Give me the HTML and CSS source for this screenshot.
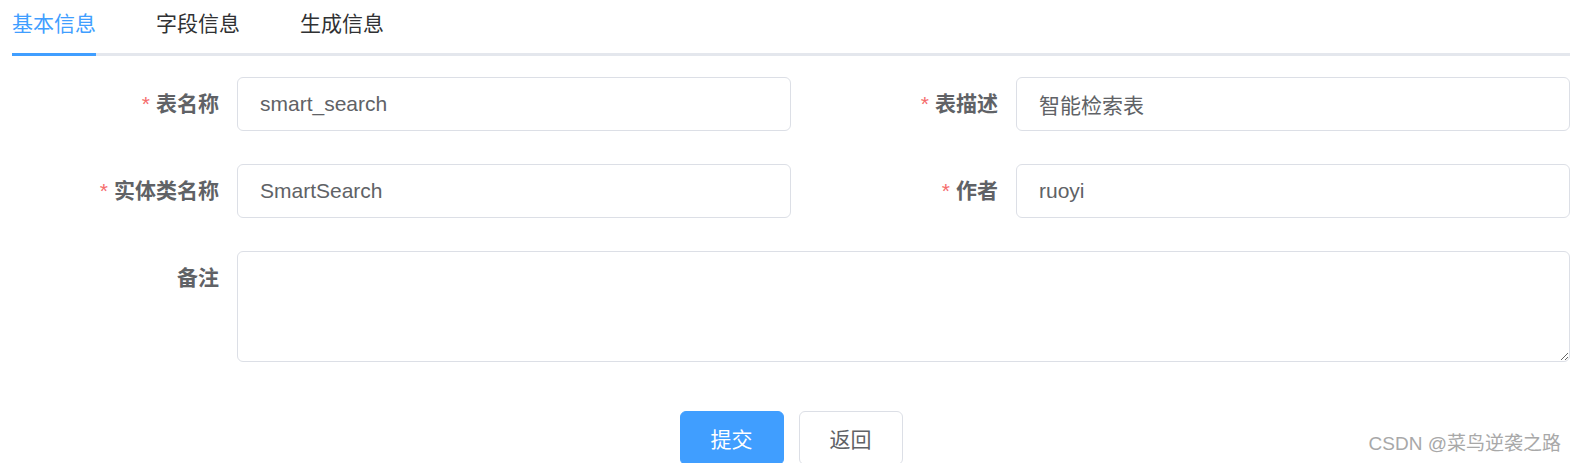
FILE: index.html
```html
<!DOCTYPE html>
<html lang="zh-CN">
<head>
  <meta charset="UTF-8" />
  <meta name="viewport" content="width=device-width, initial-scale=1.0"/>
  <title>修改生成配置</title>
  <link rel="stylesheet" href="styles.css">
</head>
<body>
  <div class="page">
    <!-- Tabs -->
    <div class="tabs">
      <div class="tab active">基本信息</div>
      <div class="tab">字段信息</div>
      <div class="tab">生成信息</div>
    </div>

    <!-- Basic info form -->
    <form class="form">
      <div class="form-row">
        <div class="form-item">
          <label class="form-label required">表名称</label>
          <div class="form-content">
            <input class="input" type="text" value="smart_search" />
          </div>
        </div>
        <div class="form-item">
          <label class="form-label required">表描述</label>
          <div class="form-content">
            <input class="input" type="text" value="智能检索表" />
          </div>
        </div>
      </div>

      <div class="form-row">
        <div class="form-item">
          <label class="form-label required">实体类名称</label>
          <div class="form-content">
            <input class="input" type="text" value="SmartSearch" />
          </div>
        </div>
        <div class="form-item">
          <label class="form-label required">作者</label>
          <div class="form-content">
            <input class="input" type="text" value="ruoyi" />
          </div>
        </div>
      </div>

      <div class="form-row">
        <div class="form-item">
          <label class="form-label">备注</label>
          <div class="form-content">
            <textarea class="textarea"></textarea>
          </div>
        </div>
      </div>

      <div class="form-actions">
        <button type="button" class="btn btn-primary">提交</button>
        <button type="button" class="btn">返回</button>
      </div>
    </form>
  </div>

  <div class="watermark">CSDN @菜鸟逆袭之路</div>
</body>
</html>
```

FILE: styles.css
```css
* {
  box-sizing: border-box;
}

body {
  margin: 0;
  font-family: "Liberation Sans", "Noto Sans CJK SC", sans-serif;
  background: #fff;
  color: #606266;
  height: 463px;
  overflow: hidden;
}

.page {
  padding: 0 7px 0 12px;
}

/* Tabs */
.tabs {
  display: flex;
  border-bottom: 3px solid #e4e7ed;
}

.tab {
  position: relative;
  height: 53px;
  line-height: 48px;
  padding: 0 30px;
  font-size: 21px;
  color: #303133;
}

.tab:first-child {
  padding-left: 0;
}

.tab.active {
  color: #409eff;
}

.tab.active::after {
  content: "";
  position: absolute;
  left: 0;
  right: 30px;
  bottom: -3px;
  height: 3px;
  background: #409eff;
}

/* Form */
.form {
  margin-top: 21px;
}

.form-row {
  display: flex;
  margin-bottom: 33px;
}

.form-item {
  flex: 1;
  display: flex;
  min-width: 0;
}

.form-label {
  width: 225px;
  flex-shrink: 0;
  padding-right: 18px;
  text-align: right;
  font-size: 21px;
  font-weight: bold;
  line-height: 54px;
  color: #606266;
}

.form-label.required::before {
  content: "*";
  color: #f56c6c;
  margin-right: 6px;
  font-weight: normal;
}

.form-content {
  flex: 1;
  min-width: 0;
}

.input {
  display: block;
  width: 100%;
  height: 54px;
  padding: 0 22px;
  border: 1px solid #dcdfe6;
  border-radius: 6px;
  font-family: inherit;
  font-size: 21px;
  color: #606266;
  outline: none;
}

.textarea {
  display: block;
  width: 100%;
  height: 111px;
  padding: 8px 22px;
  border: 1px solid #dcdfe6;
  border-radius: 6px;
  font-family: inherit;
  font-size: 21px;
  color: #606266;
  resize: vertical;
  outline: none;
}

/* Buttons */
.form-actions {
  display: flex;
  justify-content: center;
  gap: 15px;
  padding-top: 16px;
}

.btn {
  width: 104px;
  height: 54px;
  padding: 0;
  border: 1px solid #dcdfe6;
  border-radius: 6px;
  background: #fff;
  color: #606266;
  font-family: inherit;
  font-size: 21px;
  cursor: pointer;
}

.btn-primary {
  background: #409eff;
  border-color: #409eff;
  color: #fff;
}

.watermark {
  position: absolute;
  right: 16px;
  top: 432px;
  font-size: 19px;
  line-height: 24px;
  color: #a8a8a8;
}
```
